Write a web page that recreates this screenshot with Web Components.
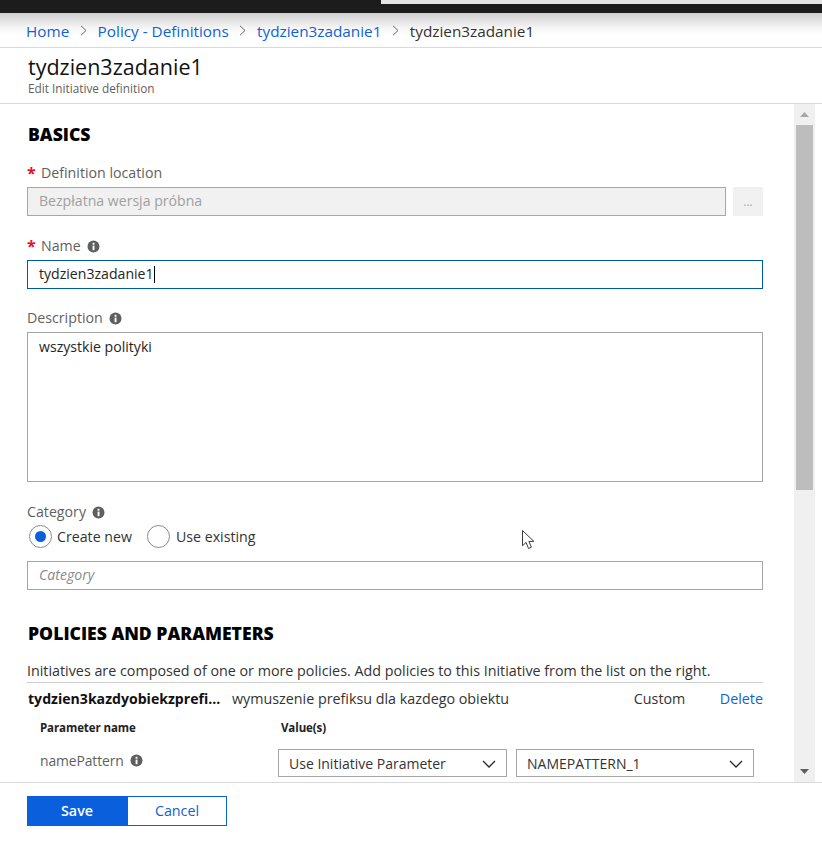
<!DOCTYPE html>
<html>
<head>
<meta charset="utf-8">
<style>
  html, body { margin: 0; height: 850px; overflow: hidden; background: #fff; }
  body { font-family: "Open Sans", "Liberation Sans", sans-serif; font-size: 14px; color: #252525; }
</style>
</head>
<body>
<az-blade>
  <az-crumbs slot="crumbs"></az-crumbs>
  <az-title slot="title" name="tydzien3zadanie1" sub="Edit Initiative definition"></az-title>

  <az-section title="BASICS" style="--top:22px"></az-section>
  <az-field label="Definition location" required style="--top:20px">
    <az-input disabled value="Bezpłatna wersja próbna" more></az-input>
  </az-field>
  <az-field label="Name" required info style="--top:19px">
    <az-input focused caret value="tydzien3zadanie1"></az-input>
  </az-field>
  <az-field label="Description" info style="--top:18px">
    <az-input tall value="wszystkie polityki"></az-input>
  </az-field>
  <az-field label="Category" info style="--top:19px">
    <az-radios></az-radios>
    <az-input italic placeholder="Category" style="margin-top:13px"></az-input>
  </az-field>

  <az-section title="POLICIES AND PARAMETERS" style="--top:35px"></az-section>
  <az-policy></az-policy>

  <az-footer slot="footer"></az-footer>
</az-blade>

<script>
const INFO = `<svg width="13" height="13" viewBox="0 0 13 13" aria-hidden="true"><circle cx="6.5" cy="6.5" r="6" fill="#5f5f5f"/><rect x="5.6" y="5.6" width="1.9" height="4.6" fill="#fff"/><rect x="5.6" y="2.8" width="1.9" height="1.9" fill="#fff"/></svg>`;
const CHEVRON = `<svg width="14" height="8" viewBox="0 0 14 8" aria-hidden="true"><path d="M1 1l6 6 6-6" fill="none" stroke="#252525" stroke-width="1.3"/></svg>`;

class AzBlade extends HTMLElement {
  constructor() {
    super();
    this.attachShadow({ mode: 'open' });
    this.shadowRoot.innerHTML = `
      <style>
        :host { display: flex; flex-direction: column; width: 822px; height: 850px; position: relative; }
        .top { height: 13px; background: #1c1c1c; flex: none; position: relative; }
        .top::before { content: ""; position: absolute; left: 381px; right: 0; top: 0; height: 4px; background: #e4e4e4; }
        .body { display: flex; height: 678px; border-bottom: 1px solid #d9d9d9; flex: none; }
        .scroll { width: 767px; padding-left: 27px; overflow: hidden; flex: none; }
        .inner { width: 736px; }
        .cursor { position: absolute; left: 522px; top: 530px; }
      </style>
      <div class="top"></div>
      <slot name="crumbs"></slot>
      <slot name="title"></slot>
      <div class="body">
        <div class="scroll"><div class="inner"><slot></slot></div></div>
        <az-scrollbar></az-scrollbar>
      </div>
      <slot name="footer"></slot>
      <svg class="cursor" width="13" height="20" viewBox="0 0 13 20" aria-hidden="true"><path d="M.5.5v15.2l3.6-3.3 2.4 6.1 2.9-1.2-2.5-5.9h5z" fill="#fff" stroke="#3a3a3a" stroke-width="1"/></svg>`;
  }
}

class AzScrollbar extends HTMLElement {
  constructor() {
    super();
    this.attachShadow({ mode: 'open' });
    this.shadowRoot.innerHTML = `
      <style>
        :host { display: flex; flex-direction: column; width: 21px; background: #f0f0f0; align-items: center; flex: none; }
        .btn { height: 21px; width: 100%; display: flex; align-items: center; justify-content: center; flex: none; }
        .thumb { width: 17px; height: 365px; background: #bdbdbd; flex: none; }
        .rest { flex: 1; }
      </style>
      <div class="btn"><svg width="9" height="5" viewBox="0 0 9 5" aria-hidden="true"><path d="M4.5 0L9 5H0z" fill="#a6a6a6"/></svg></div>
      <div class="thumb"></div>
      <div class="rest"></div>
      <div class="btn"><svg width="9" height="5" viewBox="0 0 9 5" aria-hidden="true"><path d="M0 0h9L4.5 5z" fill="#5f5f5f"/></svg></div>`;
  }
}

class AzCrumbs extends HTMLElement {
  constructor() {
    super();
    this.attachShadow({ mode: 'open' });
    const items = ['Home', 'Policy - Definitions', 'tydzien3zadanie1'];
    const sep = `<svg width="7" height="11" viewBox="0 0 7 11" aria-hidden="true"><path d="M1 .8l5 4.7-5 4.7" fill="none" stroke="#666" stroke-width="1"/></svg>`;
    this.shadowRoot.innerHTML = `
      <style>
        :host { display: flex; align-items: center; height: 34px; flex: none; box-sizing: border-box; padding: 1px 0 0 26px; gap: 10.7px;
                font-size: 15.3px;
                background: linear-gradient(#cfcfcf, #f6f6f6 45%, #fff 65%); }
        a { color: #0f62d6; text-decoration: none; }
        span { color: #333; }
        svg { flex: none; }
      </style>
      ${items.map(t => `<a>${t}</a>${sep}`).join('')}<span>tydzien3zadanie1</span>`;
  }
}

class AzTitle extends HTMLElement {
  constructor() {
    super();
    this.attachShadow({ mode: 'open' });
    this.shadowRoot.innerHTML = `
      <style>
        :host { display: block; height: 57px; flex: none; box-sizing: border-box; padding: 6px 0 0 28px;
                border-top: 1px solid #d9d9d9; border-bottom: 1px solid #d9d9d9; }
        h1 { margin: 0; font-size: 21.5px; font-weight: 400; line-height: 26px; color: #111; }
        p { margin: 1px 0 0; font-size: 11.8px; line-height: 14px; color: #5f5f5f; }
      </style>
      <h1>${this.getAttribute('name')}</h1>
      <p>${this.getAttribute('sub')}</p>`;
  }
}

class AzSection extends HTMLElement {
  constructor() {
    super();
    this.attachShadow({ mode: 'open' });
    this.shadowRoot.innerHTML = `
      <style>
        :host { display: block; margin-top: var(--top, 0); height: 16px; padding-left: 1px; }
        h2 { margin: 0; font-size: 17.6px; line-height: 16px; font-weight: 800; color: #000; }
      </style>
      <h2>${this.getAttribute('title')}</h2>`;
  }
}

class AzField extends HTMLElement {
  constructor() {
    super();
    this.attachShadow({ mode: 'open' });
    const req = this.hasAttribute('required');
    this.shadowRoot.innerHTML = `
      <style>
        :host { display: block; margin-top: var(--top, 0); }
        .label { display: flex; align-items: center; height: 20px; margin-bottom: 5px; color: #5f5f5f; font-size: 14.2px; }
        .star { color: #e81123; width: 14px; font-size: 16px; font-weight: 700; line-height: 14px; height: 12px; }
        svg { margin-left: 6px; margin-top: 2px; }
      </style>
      <div class="label">${req ? '<span class="star">*</span>' : ''}<span>${this.getAttribute('label')}</span>${this.hasAttribute('info') ? INFO : ''}</div>
      <slot></slot>`;
  }
}

class AzInput extends HTMLElement {
  constructor() {
    super();
    this.attachShadow({ mode: 'open' });
    const value = this.getAttribute('value');
    const placeholder = this.getAttribute('placeholder');
    this.shadowRoot.innerHTML = `
      <style>
        :host { display: flex; gap: 7px; font-size: 14.1px; }
        .box { flex: 1; height: 29px; box-sizing: border-box; border: 1px solid #a6a6a6; padding: 0 10px 0 11px; line-height: 26px; color: #252525; background: #fff; white-space: nowrap; }
        :host([disabled]) .box { background: #f1f1f1; color: #a0a0a0; }
        :host([focused]) .box { border-color: #0058ad; }
        :host([tall]) .box { height: 150px; padding-top: 1px; }
        :host([italic]) .box { color: #8a8a8a; font-style: italic; }
        .more { width: 30px; height: 29px; background: #f1f1f1; color: #a6a6a6; font-size: 12px; text-align: center; line-height: 30px; flex: none; }
        .caret { display: inline-block; width: 1px; height: 17px; background: #000; vertical-align: -4px; }
      </style>
      <div class="box">${value || placeholder}${this.hasAttribute('caret') ? '<span class="caret"></span>' : ''}</div>
      ${this.hasAttribute('more') ? '<div class="more">...</div>' : ''}`;
  }
}

class AzRadios extends HTMLElement {
  constructor() {
    super();
    this.attachShadow({ mode: 'open' });
    this.shadowRoot.innerHTML = `
      <style>
        :host { display: flex; align-items: center; height: 24px; padding-left: 2px; font-size: 14.2px; color: #333; margin-top: -2px; }
        .dot { width: 23px; height: 23px; box-sizing: border-box; border: 1px solid #8a8a8a; border-radius: 50%; margin-right: 5px; display: flex; align-items: center; justify-content: center; flex: none; }
        .on::after { content: ""; width: 11px; height: 11px; border-radius: 50%; background: #0a5fdc; }
        .label { margin-right: 15px; }
        .label + .dot { margin-right: 6px; }
      </style>
      <div class="dot on"></div><span class="label">Create new</span>
      <div class="dot"></div><span class="label">Use existing</span>`;
  }
}

class AzSelect extends HTMLElement {
  constructor() {
    super();
    this.attachShadow({ mode: 'open' });
    this.shadowRoot.innerHTML = `
      <style>
        :host { display: flex; align-items: center; justify-content: space-between; height: 28px; box-sizing: border-box; border: 1px solid #a6a6a6; padding: 0 10px; font-size: 14px; color: #333; flex: none; }
        svg { flex: none; margin-top: 1px; }
      </style>
      <span>${this.getAttribute('value')}</span>${CHEVRON}`;
  }
}

class AzPolicy extends HTMLElement {
  constructor() {
    super();
    this.attachShadow({ mode: 'open' });
    this.shadowRoot.innerHTML = `
      <style>
        :host { display: block; font-size: 14.3px; color: #333; }
        .intro { margin-top: 20px; height: 21px; line-height: 20px; border-bottom: 1px solid #d0d0d0; white-space: nowrap; }
        .row { display: flex; align-items: center; height: 30px; }
        .name { width: 205px; font-weight: 700; color: #111; flex: none; white-space: nowrap; font-size: 14.1px; padding-left: 1px; box-sizing: border-box; }
        .desc { flex: 1; white-space: nowrap; }
        .type { width: 86px; flex: none; }
        .del { color: #0f62d6; }
        .params { display: grid; grid-template-columns: 229px auto auto; column-gap: 9px; padding-left: 13px; justify-content: start; }
        .head { font-size: 11.5px; font-weight: 700; color: #222; height: 20px; line-height: 20px; letter-spacing: -.1px; margin-top: 5px; }
        .head.val { padding-left: 3px; grid-column: 2 / 4; }
        .pname { display: flex; align-items: center; gap: 6px; color: #5f5f5f; height: 28px; padding-bottom: 5px; box-sizing: border-box; font-size: 13.9px; letter-spacing: -.1px; }
        .gap { grid-column: 1 / 4; height: 11px; }
      </style>
      <div class="intro">Initiatives are composed of one or more policies. Add policies to this Initiative from the list on the right.</div>
      <div class="row">
        <span class="name">tydzien3kazdyobiekzprefi...</span>
        <span class="desc">wymuszenie prefiksu dla kazdego obiektu</span>
        <span class="type">Custom</span>
        <a class="del">Delete</a>
      </div>
      <div class="params">
        <div class="head">Parameter name</div>
        <div class="head val">Value(s)</div>
        <div class="gap"></div>
        <div class="pname">namePattern ${INFO}</div>
        <az-select value="Use Initiative Parameter" style="width:229px"></az-select>
        <az-select value="NAMEPATTERN_1" style="width:238px"></az-select>
      </div>`;
  }
}

class AzFooter extends HTMLElement {
  constructor() {
    super();
    this.attachShadow({ mode: 'open' });
    this.shadowRoot.innerHTML = `
      <style>
        :host { display: flex; padding: 13px 0 0 27px; flex: none; }
        button { width: 100px; height: 30px; box-sizing: border-box; border: 1px solid #0a5fdc; font: inherit; font-size: 14.3px; padding: 0 0 1px; }
        .save { background: #0a5fdc; color: #fff; font-weight: 600; }
        .cancel { background: #fff; color: #0f62d6; }
      </style>
      <button class="save">Save</button><button class="cancel">Cancel</button>`;
  }
}

customElements.define('az-blade', AzBlade);
customElements.define('az-scrollbar', AzScrollbar);
customElements.define('az-crumbs', AzCrumbs);
customElements.define('az-title', AzTitle);
customElements.define('az-section', AzSection);
customElements.define('az-field', AzField);
customElements.define('az-input', AzInput);
customElements.define('az-radios', AzRadios);
customElements.define('az-select', AzSelect);
customElements.define('az-policy', AzPolicy);
customElements.define('az-footer', AzFooter);
</script>
</body>
</html>
